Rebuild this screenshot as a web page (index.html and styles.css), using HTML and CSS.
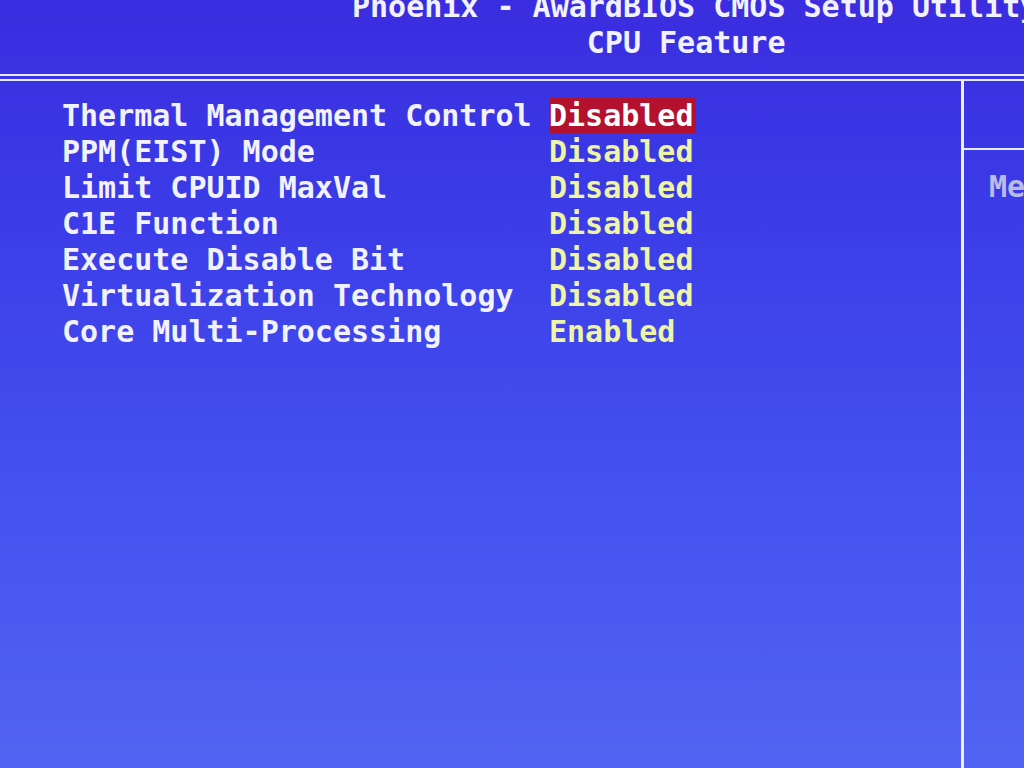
FILE: index.html
```html
<!DOCTYPE html>
<html>
<head>
<meta charset="utf-8">
<title>CPU Feature</title>
<link rel="stylesheet" href="styles.css">
</head>
<body>
<div class="screen">
  <header class="header">
    <div class="title-line">Phoenix - AwardBIOS CMOS Setup Utility</div>
    <div class="title-line subtitle">CPU Feature</div>
  </header>
  <div class="double-rule"></div>
  <main class="body">
    <section class="items">
      <div class="item"><span class="label">Thermal Management Control</span><span class="value selected">Disabled</span></div>
      <div class="item"><span class="label">PPM(EIST) Mode</span><span class="value">Disabled</span></div>
      <div class="item"><span class="label">Limit CPUID MaxVal</span><span class="value">Disabled</span></div>
      <div class="item"><span class="label">C1E Function</span><span class="value">Disabled</span></div>
      <div class="item"><span class="label">Execute Disable Bit</span><span class="value">Disabled</span></div>
      <div class="item"><span class="label">Virtualization Technology</span><span class="value">Disabled</span></div>
      <div class="item"><span class="label">Core Multi-Processing</span><span class="value">Enabled</span></div>
    </section>
    <aside class="help">
      <div class="help-top"></div>
      <div class="help-text">Menu Level &#9658;</div>
    </aside>
  </main>
</div>
</body>
</html>
```
FILE: styles.css
```css
html, body {
  margin: 0;
  padding: 0;
  width: 1024px;
  height: 768px;
  overflow: hidden;
}
body {
  background: linear-gradient(180deg, #3a2ddf 0%, #3b3ae7 25%, #4350ef 60%, #5264f2 100%);
  font-family: "DejaVu Sans Mono", "Liberation Mono", monospace;
  font-weight: bold;
  font-size: 30px;
  line-height: 36px;
  color: #f2f2ff;
}
.screen {
  display: flex;
  flex-direction: column;
  height: 768px;
}
.header {
  margin-top: -11px;
  height: 85px;
  padding-left: 352px;
  display: flex;
  flex-direction: column;
  white-space: pre;
}
.title-line {
  height: 36px;
}
.subtitle {
  padding-left: 13ch;
}
.double-rule {
  height: 3px;
  border-top: 2px solid #e6eaff;
  border-bottom: 2px solid #e6eaff;
}
.body {
  flex: 1;
  display: flex;
}
.items {
  width: 899px;
  padding-left: 62px;
  padding-top: 17px;
  border-right: 3px solid #eef0ff;
  display: flex;
  flex-direction: column;
}
.item {
  display: grid;
  grid-template-columns: 487px auto;
  height: 36px;
  white-space: pre;
}
.value {
  color: #eef5a6;
  justify-self: start;
}
.value.selected {
  color: #ffffff;
  background: #b3112e;
  padding-right: 2px;
  height: 35px;
}
.help {
  flex: 1;
  display: flex;
  flex-direction: column;
  overflow: hidden;
}
.help-top {
  height: 67px;
  border-bottom: 2px solid #e6eaff;
}
.help-text {
  padding-left: 25px;
  padding-top: 19px;
  color: #b9bde6;
  white-space: pre;
}
```
